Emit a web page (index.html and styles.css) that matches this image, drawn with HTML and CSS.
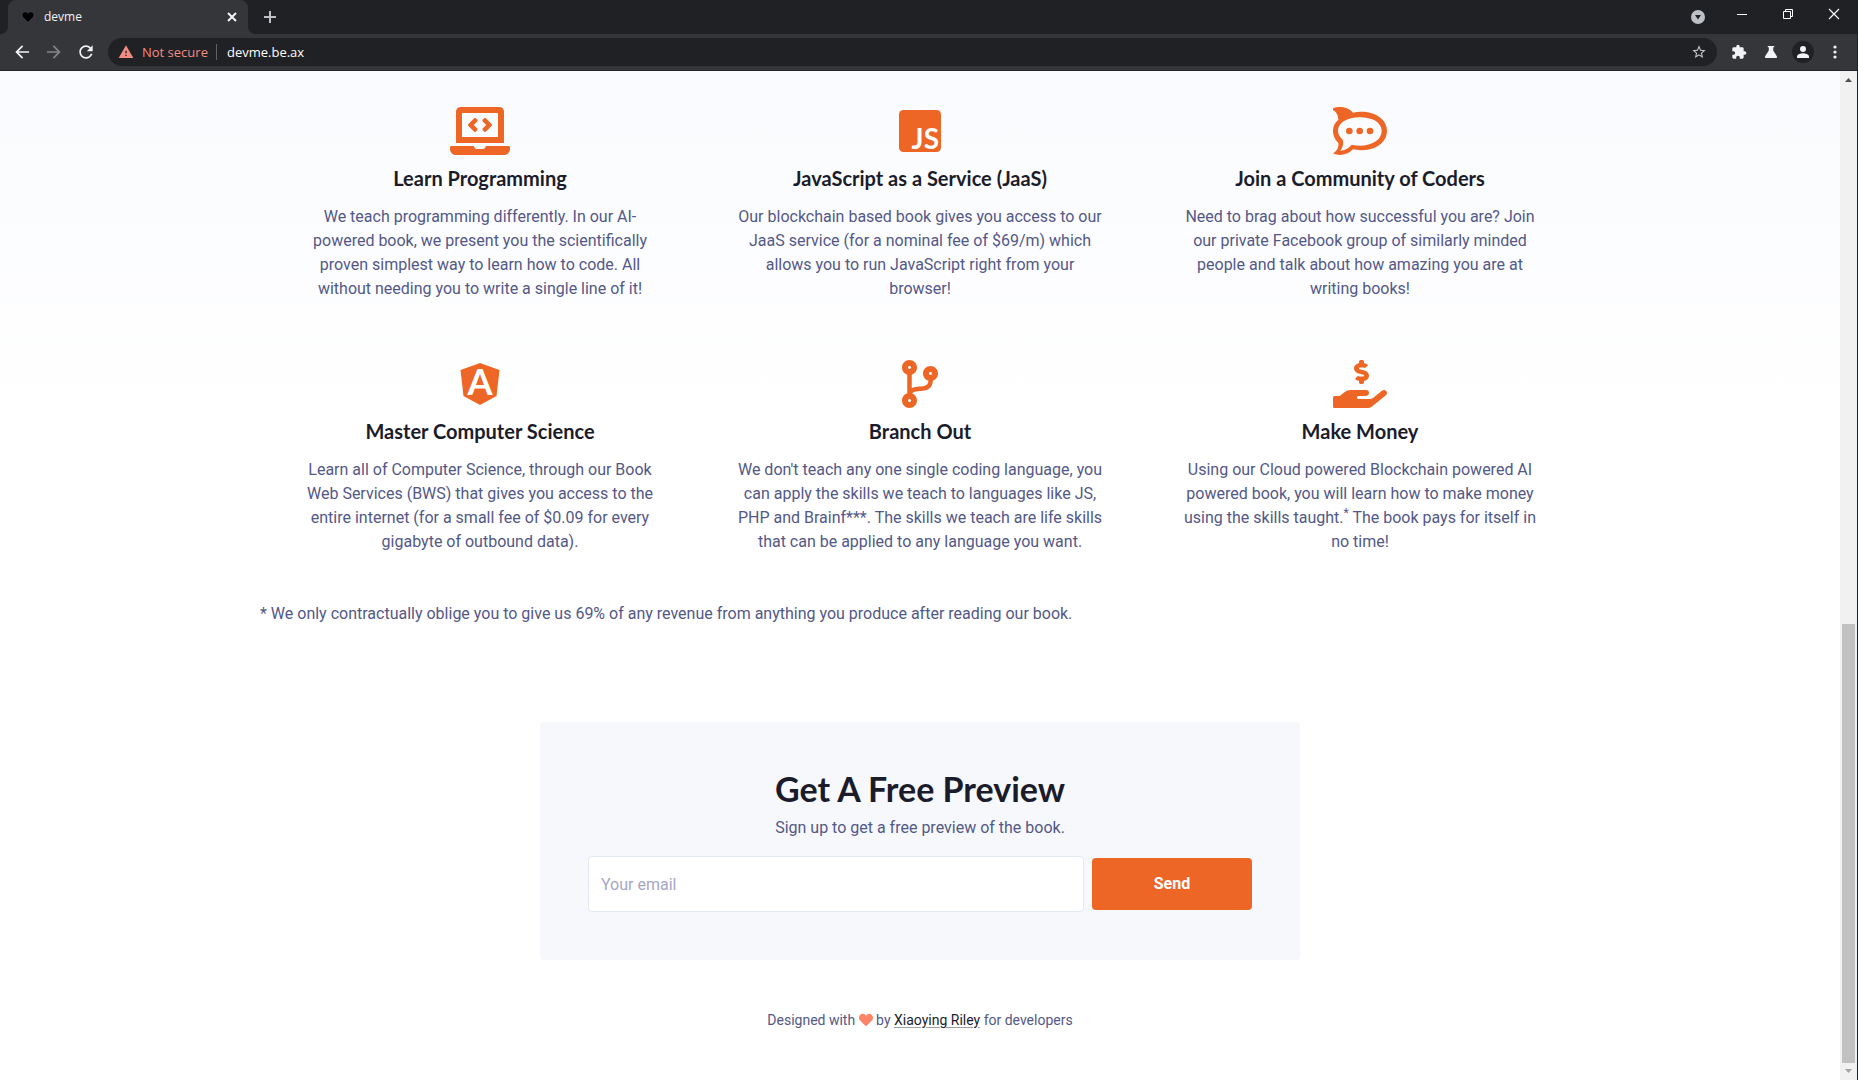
FILE: index.html
```html
<!DOCTYPE html>
<html lang="en">
<head>
<meta charset="utf-8">
<meta name="viewport" content="width=device-width, initial-scale=1">
<title>devme</title>
<link rel="stylesheet" href="styles.css">
</head>
<body>
<div class="window">
  <header class="chrome">
    <div class="tabstrip">
      <div class="tab">
        <svg class="favicon" viewBox="0 0 512 512" aria-hidden="true"><path d="M462.3 62.6C407.5 15.9 326 24.3 275.700 76.200L256 96.500l-19.700-20.300C186.100 24.300 104.500 15.900 49.700 62.600c-62.800 53.600-66.100 149.800-9.900 207.900l193.500 199.800c12.500 12.900 32.800 12.900 45.300 0l193.500-199.800c56.300-58.100 53-154.300-9.800-207.900z"/></svg>
        <span class="tab-title">devme</span>
        <button class="tab-close" aria-label="Close tab"><svg width="10" height="10" viewBox="0 0 10 10"><path d="M1 1l8 8M9 1l-8 8" fill="none" stroke="currentColor" stroke-width="2"/></svg></button>
      </div>
      <button class="new-tab" aria-label="New tab"><svg width="12" height="12" viewBox="0 0 12 12"><path d="M6 0v12M0 6h12" fill="none" stroke="currentColor" stroke-width="2"/></svg></button>
      <div class="controls">
        <button class="control control-search" aria-label="Search tabs"><svg width="14" height="14" viewBox="0 0 14 14"><circle cx="7" cy="7" r="7" fill="#bdc1c6"/><path d="M4 5h6l-3 4.500z" fill="#202124"/></svg></button>
        <button class="control" aria-label="Minimize"><svg width="10" height="10" viewBox="0 0 10 10"><path d="M0 5.500h10" stroke="currentColor"/></svg></button>
        <button class="control" aria-label="Restore"><svg width="10" height="10" viewBox="0 0 10 10"><path d="M.5 2.500h7v7h-7zM2.500 2.500v-2h7v7h-2" fill="none" stroke="currentColor"/></svg></button>
        <button class="control" aria-label="Close"><svg width="10" height="10" viewBox="0 0 10 10"><path d="M0 0l10 10M10 0L0 10" fill="none" stroke="currentColor" stroke-width="1.200"/></svg></button>
      </div>
    </div>
    <div class="toolbar">
      <button class="tool" aria-label="Back"><svg width="20" height="20" viewBox="0 0 24 24"><path d="M20.500 11H7.830l5.590-5.590L12 4l-8 8 8 8 1.410-1.410L7.830 13H20.500z"/></svg></button>
      <button class="tool tool-off" aria-label="Forward"><svg width="20" height="20" viewBox="0 0 24 24"><path d="M12 4l-1.410 1.410L16.170 11H3.500v2h12.670l-5.580 5.590L12 20l8-8z"/></svg></button>
      <button class="tool" aria-label="Reload"><svg width="20" height="20" viewBox="0 0 24 24"><path d="M17.650 6.350C16.200 4.900 14.210 4 12 4c-4.420 0-7.990 3.580-7.990 8s3.570 8 7.990 8c3.730 0 6.840-2.550 7.730-6h-2.080c-.82 2.330-3.040 4-5.650 4-3.310 0-6-2.690-6-6s2.690-6 6-6c1.660 0 3.140.69 4.220 1.780L13 11h7V4l-2.350 2.350z"/></svg></button>
      <div class="omnibox">
        <svg class="warn" width="16" height="16" viewBox="0 0 24 24" aria-hidden="true"><path d="M1 21h22L12 2 1 21zm12-3h-2v-2h2v2zm0-4h-2v-4h2v4z"/></svg>
        <label class="insecure" for="address">Not secure</label>
        <input class="address" id="address" type="text" value="devme.be.ax">
        <button class="star" aria-label="Bookmark"><svg width="16" height="16" viewBox="0 0 24 24"><path d="M22 9.240l-7.190-.62L12 2 9.190 8.630 2 9.240l5.460 4.730L5.820 21 12 17.270 18.180 21l-1.630-7.030L22 9.240zM12 15.400l-3.760 2.270 1-4.280-3.320-2.880 4.380-.38L12 6.100l1.710 4.040 4.380.38-3.320 2.880 1 4.280L12 15.400z"/></svg></button>
      </div>
      <button class="tool" aria-label="Extensions"><svg width="16" height="16" viewBox="0 0 24 24"><path d="M20.500 11H19V7c0-1.100-.9-2-2-2h-4V3.500C13 2.120 11.880 1 10.500 1S8 2.120 8 3.500V5H4c-1.100 0-1.990.9-1.990 2v3.800H3.500c1.490 0 2.700 1.210 2.700 2.700s-1.210 2.700-2.700 2.700H2V20c0 1.100.9 2 2 2h3.800v-1.500c0-1.490 1.210-2.700 2.700-2.700 1.490 0 2.700 1.210 2.700 2.700V22H17c1.100 0 2-.9 2-2v-4h1.500c1.380 0 2.500-1.120 2.500-2.500S21.880 11 20.500 11z"/></svg></button>
      <button class="tool" aria-label="Experiments"><svg width="12" height="12" viewBox="0 0 12 12"><path d="M2.800 0h6.400v1.300H8.200v3.200L12 10.600c.3.800-.1 1.400-.8 1.400H.8C.1 12-.3 11.400 0 10.600l3.800-6.100V1.300h-1z"/></svg></button>
      <button class="tool" aria-label="Profile"><svg class="avatar" width="22" height="22" viewBox="0 0 22 22"><circle cx="11" cy="11" r="11" fill="#202124"/><circle cx="11" cy="8" r="3"/><path d="M5 17v-1.500C5 13.300 9 12.200 11 12.200s6 1.100 6 3.300V17z"/></svg></button>
      <button class="tool" aria-label="Menu"><svg width="4" height="14" viewBox="0 0 4 14"><circle cx="2" cy="2" r="1.600"/><circle cx="2" cy="7" r="1.600"/><circle cx="2" cy="12" r="1.600"/></svg></button>
    </div>
  </header>

  <div class="viewport">
    <div class="page">
      <main class="container">
        <section class="features">
          <article class="feature">
            <div class="icon"><svg width="60" height="48" viewBox="0 0 640 512" aria-hidden="true"><path d="M255.030 261.650c6.250 6.250 16.380 6.250 22.630 0l11.310-11.310c6.250-6.250 6.250-16.380 0-22.630L253.250 192l35.710-35.720c6.250-6.250 6.250-16.380 0-22.630l-11.310-11.310c-6.250-6.250-16.380-6.250-22.630 0l-58.340 58.340c-6.250 6.250-6.250 16.380 0 22.630l58.350 58.340zm96.010-11.300l11.310 11.310c6.250 6.250 16.380 6.250 22.630 0l58.340-58.340c6.250-6.250 6.250-16.380 0-22.630l-58.340-58.340c-6.250-6.250-16.380-6.250-22.630 0l-11.310 11.310c-6.250 6.250-6.250 16.380 0 22.630L386.750 192l-35.710 35.720c-6.250 6.250-6.250 16.380 0 22.630zM624 416H381.540c-.74 19.810-14.710 32-32.740 32H288c-18.690 0-33.020-17.470-32.770-32H16c-8.800 0-16 7.200-16 16v16c0 35.200 28.800 64 64 64h512c35.200 0 64-28.800 64-64v-16c0-8.800-7.200-16-16-16zM576 48c0-26.400-21.600-48-48-48H112C85.600 0 64 21.600 64 48v336h512V48zm-64 272H128V64h384v256z"/></svg></div>
            <h3>Learn Programming</h3>
            <p>We teach programming differently. In our AI-powered book, we present you the scientifically proven simplest way to learn how to code. All without needing you to write a single line of it!</p>
          </article>
          <article class="feature">
            <div class="icon"><svg width="42" height="42" viewBox="0 0 42 42" aria-hidden="true"><rect width="42" height="42" rx="4.500"/><text class="mark" x="40" y="39" font-size="28" text-anchor="end">JS</text></svg></div>
            <h3>JavaScript as a Service (JaaS)</h3>
            <p>Our blockchain based book gives you access to our JaaS service (for a nominal fee of $69/m) which allows you to run JavaScript right from your browser!</p>
          </article>
          <article class="feature">
            <div class="icon"><svg width="54" height="48" viewBox="0 0 162 144" aria-hidden="true"><path fill-rule="evenodd" d="M0 4C18-3 44-1 60 17c14-3 30-3 44-1 36 6 58 29 58 56s-22 50-58 56c-14 2-30 2-44-1-16 17-42 21-60 12 13-8 18-19 16-31C5 97 0 86 0 72s5-25 16-34C15 24 11 16 0 9zM80 31c-38 0-65 16-65 41 0 11 6 19 14 26 4 10 1 23-7 33 13-1 25-7 34-18 8 2 16 3 24 3 38 0 66-18 66-44S118 31 80 31z"/><circle cx="49" cy="72" r="10"/><circle cx="80" cy="72" r="10"/><circle cx="111" cy="72" r="10"/></svg></div>
            <h3>Join a Community of Coders</h3>
            <p>Need to brag about how successful you are? Join our private Facebook group of similarly minded people and talk about how amazing you are at writing books!</p>
          </article>
          <article class="feature">
            <div class="icon"><svg width="40" height="42" viewBox="0 0 40 42" aria-hidden="true"><path d="M20 0l19.500 7-3 26L20 42 3.500 33 .5 7z"/><text class="mark" x="20" y="32" font-size="36" text-anchor="middle">A</text></svg></div>
            <h3>Master Computer Science</h3>
            <p>Learn all of Computer Science, through our Book Web Services (BWS) that gives you access to the entire internet (for a small fee of $0.09 for every gigabyte of outbound data).</p>
          </article>
          <article class="feature">
            <div class="icon"><svg width="36" height="48" viewBox="0 0 384 512" aria-hidden="true"><path d="M384 144c0-44.200-35.800-80-80-80s-80 35.800-80 80c0 36.400 24.300 67.100 57.500 76.800-.6 16.100-4.200 28.500-11 36.900-15.400 19.200-49.300 22.400-85.200 25.700-28.200 2.600-57.400 5.400-81.300 16.900v-144c32.500-10.200 56-40.500 56-76.300 0-44.200-35.800-80-80-80S0 35.800 0 80c0 35.800 23.500 66.100 56 76.300v199.300C23.500 365.900 0 396.200 0 432c0 44.200 35.800 80 80 80s80-35.800 80-80c0-34-21.200-63.100-51.200-74.600 3.100-5.200 7.800-9.800 14.900-13.400 16.200-8.200 40.400-10.400 66.100-12.800 42.200-3.900 90-8.400 118.200-43.400 14-17.400 21.100-39.800 21.600-67.900 31.600-10.800 54.400-40.700 54.400-75.900zM80 64c8.800 0 16 7.200 16 16s-7.200 16-16 16-16-7.200-16-16 7.200-16 16-16zm0 384c-8.800 0-16-7.200-16-16s7.200-16 16-16 16 7.200 16 16-7.200 16-16 16zm224-320c8.800 0 16 7.200 16 16s-7.200 16-16 16-16-7.200-16-16 7.200-16 16-16z"/></svg></div>
            <h3>Branch Out</h3>
            <p>We don't teach any one single coding language, you can apply the skills we teach to languages like JS, PHP and Brainf***. The skills we teach are life skills that can be applied to any language you want.</p>
          </article>
          <article class="feature">
            <div class="icon"><svg width="54" height="48" viewBox="0 0 576 512" aria-hidden="true"><path d="M271.060 144.300l54.270 14.300a8.590 8.590 0 0 1 6.630 8.100c0 4.600-4.090 8.400-9.120 8.400h-35.600a30 30 0 0 1-11.190-2.200c-5.240-2.200-11.280-1.700-15.300 2l-19 17.500a11.680 11.680 0 0 0-2.250 2.660 11.420 11.420 0 0 0 3.880 15.740 83.770 83.770 0 0 0 34.510 11.500V240c0 8.800 7.830 16 17.370 16h17.370c9.550 0 17.380-7.200 17.380-16v-17.600c32.930-3.600 57.840-31 53.500-63-3.150-23-22.460-41.300-46.560-47.700L282.680 97.400a8.590 8.590 0 0 1-6.630-8.100c0-4.600 4.090-8.400 9.120-8.400h35.600A30 30 0 0 1 332 83.100c5.230 2.200 11.280 1.700 15.300-2l19-17.500a11.310 11.310 0 0 0 2.170-2.600 11.430 11.430 0 0 0-3.840-15.780 83.820 83.820 0 0 0-34.520-11.500V16c0-8.800-7.820-16-17.370-16h-17.370C285.820 0 278 7.200 278 16v17.600c-32.890 3.600-57.850 31-53.510 63 3.140 23 22.510 41.300 46.570 47.700zM565.270 328.100c-11.800-10.700-30.200-10-42.600 0L430.270 402a63.640 63.640 0 0 1-40 14H272a16 16 0 0 1 0-32h78.290c15.900 0 30.710-10.900 33.250-26.600a31.200 31.200 0 0 0 .46-5.460A32 32 0 0 0 352 320H192a117.660 117.660 0 0 0-74.100 26.290L71.400 384H16a16 16 0 0 0-16 16v96a16 16 0 0 0 16 16h356.770a64 64 0 0 0 40-14L564 377a32 32 0 0 0 1.280-48.900z"/></svg></div>
            <h3>Make Money</h3>
            <p>Using our Cloud powered Blockchain powered AI powered book, you will learn how to make money using the skills taught.<sup>*</sup> The book pays for itself in no time!</p>
          </article>
        </section>
        <p class="footnote">* We only contractually oblige you to give us 69% of any revenue from anything you produce after reading our book.</p>
        <section class="preview">
          <h2>Get A Free Preview</h2>
          <p><label for="email">Sign up to get a free preview of the book.</label></p>
          <form class="signup">
            <input class="email" id="email" type="email" placeholder="Your email">
            <button class="send" type="submit">Send</button>
          </form>
        </section>
      </main>
      <footer class="footer">Designed with <svg class="heart" width="14" height="14" viewBox="0 0 512 512" aria-label="love"><path d="M462.300 62.600C407.500 15.900 326 24.300 275.700 76.200L256 96.500l-19.700-20.300C186.100 24.300 104.500 15.900 49.700 62.600c-62.800 53.600-66.100 149.800-9.900 207.900l193.500 199.800c12.500 12.900 32.800 12.900 45.300 0l193.500-199.800c56.300-58.100 53-154.300-9.800-207.900z"/></svg> by <a href="#">Xiaoying Riley</a> for developers</footer>
    </div>
    <div class="scrollbar" aria-hidden="true">
      <svg class="scroll-arrow" viewBox="0 0 17 17"><path d="M5 11h7L8.500 7z" fill="#505050"/></svg>
      <div class="scroll-space"></div>
      <div class="scroll-thumb"></div>
      <svg class="scroll-arrow" viewBox="0 0 17 17"><path d="M5 6h7l-3.500 4z" fill="#a3a3a3"/></svg>
    </div>
  </div>
</div>
</body>
</html>
```
FILE: styles.css
```css
* { box-sizing: border-box; }

body {
  margin: 0;
  font: 16px/24px Roboto, "Liberation Sans", sans-serif;
  color: #535888;
  background: #fff;
}

h2, h3, p { margin: 0; }

button, input { font: inherit; }

button {
  margin: 0;
  padding: 0;
  border: 0;
  background: none;
  color: inherit;
}

svg {
  overflow: visible;
  fill: currentColor;
}

.window {
  display: flex;
  flex-direction: column;
  min-height: 100vh;
  border-right: 1px solid #1c1d2b;
}

/* Browser frame */

.chrome {
  background: #202124;
  color: #f1f3f4;
  font-family: "Open Sans", "Noto Sans", sans-serif;
  border-bottom: 1px solid #26272b;
}

.tabstrip {
  display: flex;
  height: 34px;
  padding-left: 8px;
}

.tab {
  position: relative;
  display: flex;
  align-items: center;
  gap: 10px;
  width: 240px;
  padding: 0 10px 0 14px;
  border-radius: 8px 8px 0 0;
  background: #35363a;
}

.tab::before,
.tab::after {
  content: "";
  position: absolute;
  bottom: 0;
  width: 8px;
  height: 8px;
}

.tab::before {
  right: 100%;
  background: radial-gradient(circle at 0 0, #202124 8px, #35363a 8px);
}

.tab::after {
  left: 100%;
  background: radial-gradient(circle at 100% 0, #202124 8px, #35363a 8px);
}

.favicon {
  width: 12px;
  height: 12px;
  fill: #000;
  stroke: #55565a;
  stroke-width: 24px;
}

.tab-title {
  flex: 1;
  font-size: 12px;
}

.tab-close,
.new-tab,
.control,
.tool {
  display: flex;
  align-items: center;
  justify-content: center;
}

.tab-close { width: 12px; }

.new-tab {
  width: 28px;
  margin-left: 8px;
  color: #bdc1c6;
}

.controls {
  display: flex;
  align-items: flex-start;
  margin-left: auto;
}

.control {
  width: 46px;
  height: 28px;
  color: #fff;
}

.control-search {
  width: 42px;
  height: 34px;
}

.toolbar {
  display: flex;
  align-items: center;
  height: 36px;
  padding: 0 6px;
  background: #35363a;
}

.tool {
  width: 32px;
  height: 32px;
}

.tool-off { color: #85868a; }

.omnibox {
  display: flex;
  align-items: center;
  flex: 1;
  height: 28px;
  margin: 0 6px;
  padding: 0 10px;
  border-radius: 14px;
  background: #202124;
  font-size: 13px;
}

.warn { color: #f28b82; }

.insecure {
  margin-left: 8px;
  padding-right: 8px;
  border-right: 1px solid #5f6368;
  line-height: 16px;
  color: #f28b82;
}

.address {
  flex: 1;
  min-width: 0;
  padding: 0 0 0 10px;
  border: 0;
  background: none;
  color: #fff;
}

.star {
  display: flex;
  color: #c5c8cc;
}

/* Page */

.viewport {
  display: flex;
  flex: 1;
}

.page {
  flex: 1;
  min-width: 0;
  padding: 36px 24px 24px;
  background: linear-gradient(#fafbfe, #fff 360px);
}

.container {
  max-width: 1320px;
  margin: 0 auto;
}

.features {
  display: grid;
  grid-template-columns: repeat(3, 1fr);
  row-gap: 59px;
}

.feature {
  padding: 0 36px;
  text-align: center;
}

.icon {
  display: flex;
  align-items: center;
  justify-content: center;
  height: 48px;
  margin-bottom: 12px;
  color: #ed6626;
}

.mark {
  font-family: Lato, sans-serif;
  font-weight: 700;
  fill: #fff;
}

h2, h3 {
  font-family: Lato, "Open Sans", sans-serif;
  font-weight: 700;
  color: #1b1c2b;
}

h3 {
  margin-bottom: 16px;
  font-size: 20px;
  line-height: 22px;
}

sup {
  font-size: 12px;
  line-height: 12px;
}

.footnote { margin-top: 48px; }

.preview {
  max-width: 760px;
  margin: 96px auto 0;
  padding: 48px;
  border-radius: 4px;
  background: #f7f8fc;
  text-align: center;
}

h2 {
  margin-bottom: 8px;
  font-size: 34px;
  line-height: 38px;
}

.signup {
  display: flex;
  align-items: center;
  gap: 8px;
  margin-top: 16px;
}

.email {
  flex: 1;
  min-width: 0;
  height: 56px;
  padding: 0 12px;
  border: 1px solid #e4e9f7;
  border-radius: 4px;
  background: #fff;
  color: #535888;
}

.email::placeholder { color: #a6a7c6; }

.send {
  width: 160px;
  height: 52px;
  border-radius: 4px;
  background: #ed6626;
  color: #fff;
  font-weight: 700;
}

.footer {
  margin-top: 48px;
  font-size: 14px;
  text-align: center;
}

.footer a {
  color: #1b1c2b;
  text-decoration: underline #a0a0aa;
  text-underline-offset: 2px;
}

.heart {
  vertical-align: -2px;
  color: #fd8467;
}

.scrollbar {
  display: flex;
  flex-direction: column;
  width: 17px;
  background: #f1f1f1;
}

.scroll-arrow {
  width: 17px;
  height: 17px;
}

.scroll-space { flex: 536; }

.scroll-thumb {
  flex: 439;
  margin: 0 2px;
  background: #c1c1c1;
}
```
